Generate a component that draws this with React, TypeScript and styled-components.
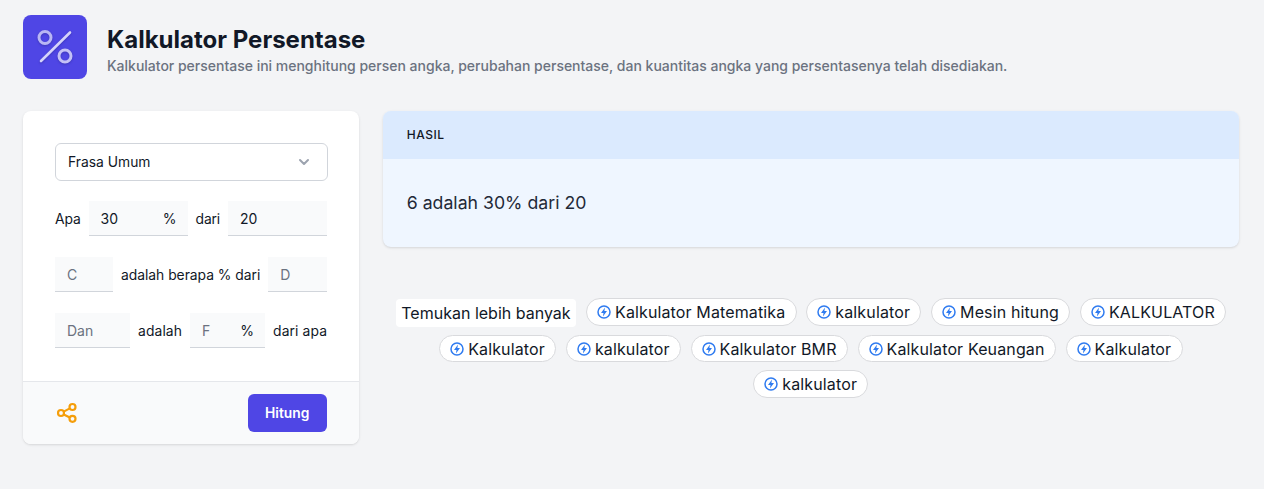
import React from "react";
import styled, { createGlobalStyle } from "styled-components";

const Global = createGlobalStyle`
  html, body { margin: 0; padding: 0; background: #f3f4f6; }
  body { font-family: Inter, "Liberation Sans", sans-serif; color: #111827; }
  * { box-sizing: border-box; }
`;
const Page = styled.div`
  width: 1264px;
  height: 489px;
  padding: 15px 25px 0 23px;
  overflow: hidden;
`;
const Header = styled.header`
  display: flex;
  align-items: center;
  gap: 20px;
  height: 64px;
`;
const LogoBox = styled.div`
  width: 64px;
  height: 64px;
  border-radius: 8px;
  background: #4f46e5;
`;
const PercentSvg = styled.svg`
  display: block;
  filter: drop-shadow(0 1px 1px rgba(30, 27, 110, 0.35));
`;
const Heading = styled.div`
  display: flex;
  flex-direction: column;
  padding-top: 6px;
`;
const Title = styled.h1`
  margin: 0;
  font-size: 24px;
  line-height: 32px;
  font-weight: 700;
  color: #111827;
`;
const Subtitle = styled.p`
  margin: 0;
  font-size: 14px;
  line-height: 20px;
  font-weight: 500;
  letter-spacing: -0.008px;
  color: #6b7280;
`;
const Main = styled.main`
  display: flex;
  gap: 24px;
  margin-top: 32px;
  align-items: flex-start;
`;
const Card = styled.section`
  width: 336px;
  height: 333px;
  background: #fff;
  border-radius: 8px;
  box-shadow: 0 1px 3px rgba(0,0,0,.1), 0 1px 2px -1px rgba(0,0,0,.1);
  overflow: hidden;
  display: flex;
  flex-direction: column;
`;
const CardBody = styled.div`
  flex: 1;
  padding: 32px 32px 0;
  display: flex;
  flex-direction: column;
`;
const Select = styled.div`
  width: 273px;
  height: 38px;
  border: 1px solid #d1d5db;
  border-radius: 6px;
  padding: 0 15px 0 12px;
  display: flex;
  align-items: center;
  justify-content: space-between;
  font-size: 13.85px;
  color: #111827;
  margin-bottom: 20px;
`;
const Row = styled.div<{ $spacing: number }>`
  display: flex;
  align-items: center;
  gap: 8px;
  height: 35px;
  margin-bottom: 21px;
  font-size: 13.88px;
  letter-spacing: ${(p) => p.$spacing}px;
  color: #111827;
  white-space: nowrap;
`;
const Field = styled.div<{ $w: number }>`
  flex: none;
  width: ${(p) => p.$w}px;
  height: 35px;
  background: #f9fafb;
  border-bottom: 1px solid #d1d5db;
  padding: 0 12px;
  display: flex;
  align-items: center;
  justify-content: space-between;
  font-size: 14px;
  letter-spacing: 0;
`;
const Placeholder = styled.span`
  color: #6b7280;
`;
const Unit = styled.span`
  margin-right: -1px;
`;
const Footer = styled.footer`
  height: 63px;
  background: #f9fafb;
  border-top: 1px solid #e5e7eb;
  padding: 0 32px;
  display: flex;
  align-items: center;
  justify-content: space-between;
`;
const Button = styled.button`
  width: 79px;
  height: 38px;
  border: 0;
  border-radius: 6px;
  background: #4f46e5;
  color: #fff;
  font: 600 13.8px Inter, sans-serif;
`;
const Right = styled.div`
  width: 857px;
  display: flex;
  flex-direction: column;
`;
const Result = styled.section`
  border-radius: 8px;
  overflow: hidden;
  background: #eff6ff;
  box-shadow: 0 1px 3px rgba(0,0,0,.1), 0 1px 2px -1px rgba(0,0,0,.1);
  height: 136px;
`;
const ResultHead = styled.div`
  height: 48px;
  background: #dbeafe;
  padding: 0 24px 2px;
  display: flex;
  align-items: center;
  font-size: 12px;
  font-weight: 500;
  letter-spacing: 0.55px;
  color: #111827;
`;
const ResultBody = styled.div`
  height: 88px;
  padding: 0 24px 2px;
  display: flex;
  align-items: center;
  font-size: 17.7px;
  color: #1f2937;
`;
const Chips = styled.div`
  display: flex;
  flex-wrap: wrap;
  justify-content: center;
  align-items: flex-start;
  gap: 8px 9.7px;
  margin-top: 51.4px;
  padding: 0 8px;
`;
const Lead = styled.span`
  background: #fff;
  height: 28px;
  margin: 1px 0 -0.4px;
  padding: 0 5.75px;
  border-radius: 4px;
  display: flex;
  align-items: center;
  font-size: 16px;
  font-weight: 400;
  color: #111827;
`;
const Chip = styled.a`
  height: 27.4px;
  padding: 0 10.3px 0 10px;
  border: 1px solid #d9dadd;
  border-radius: 14px;
  background: #fff;
  display: flex;
  align-items: center;
  gap: 4px;
  font-size: 16px;
  font-weight: 400;
  letter-spacing: 0.13px;
  color: #111827;
`;

const Percent = () => (
  <PercentSvg width="64" height="64" viewBox="0 0 64 64" fill="none" strokeWidth="3" strokeLinecap="round">
    <circle cx="22" cy="22.5" r="6" stroke="#b9b6f4" />
    <circle cx="42" cy="41" r="6" stroke="#c4c1f6" />
    <path d="M47 17.5 18 46" stroke="#d5d3fa" strokeWidth="2.6" />
  </PercentSvg>
);
const Chevron = () => (
  <svg width="16" height="16" viewBox="0 0 16 16" fill="none" stroke="#9ca3af" strokeWidth="2" strokeLinecap="round" strokeLinejoin="round">
    <path d="M4 6 8 10 12 6" />
  </svg>
);
const Share = () => (
  <svg width="24" height="24" viewBox="0 0 24 24" fill="none" stroke="#f59e0b" strokeWidth="2.2">
    <circle cx="17.5" cy="6" r="3" />
    <circle cx="6" cy="12" r="3" />
    <circle cx="17.5" cy="17.8" r="3" />
    <path d="M8.7 10.6 14.8 7.4M8.7 13.4 14.8 16.4" />
  </svg>
);
const Bolt = () => (
  <svg width="14" height="14" viewBox="0 0 14 14" fill="none">
    <circle cx="7" cy="7" r="6" stroke="#2f7bf0" strokeWidth="1.5" />
    <path d="M8 2.6 4 7.9H6.5L5.9 11.4 10 6H7.4Z" fill="#2f7bf0" />
  </svg>
);

const chips = ["Kalkulator Matematika","kalkulator","Mesin hitung","KALKULATOR","Kalkulator","kalkulator","Kalkulator BMR","Kalkulator Keuangan","Kalkulator","kalkulator"];

export default function App() {
  return (
    <Page>
      <Global />
      <Header>
        <LogoBox><Percent /></LogoBox>
        <Heading>
          <Title>Kalkulator Persentase</Title>
          <Subtitle>Kalkulator persentase ini menghitung persen angka, perubahan persentase, dan kuantitas angka yang persentasenya telah disediakan.</Subtitle>
        </Heading>
      </Header>
      <Main>
        <Card>
          <CardBody>
            <Select>Frasa Umum<Chevron /></Select>
            <Row $spacing={-0.15}>Apa<Field $w={99}><span>30</span><Unit>%</Unit></Field>dari<Field $w={99}><span>20</span></Field></Row>
            <Row $spacing={-0.03}><Field $w={58}><Placeholder>C</Placeholder></Field>adalah berapa % dari<Field $w={59}><Placeholder>D</Placeholder></Field></Row>
            <Row $spacing={0.1}><Field $w={75}><Placeholder>Dan</Placeholder></Field>adalah<Field $w={75}><Placeholder>F</Placeholder><Unit>%</Unit></Field>dari apa</Row>
          </CardBody>
          <Footer><Share /><Button>Hitung</Button></Footer>
        </Card>
        <Right>
          <Result>
            <ResultHead>HASIL</ResultHead>
            <ResultBody>6 adalah 30% dari 20</ResultBody>
          </Result>
          <Chips>
            <Lead>Temukan lebih banyak</Lead>
            {chips.map((c, i) => <Chip key={i}><Bolt />{c}</Chip>)}
          </Chips>
        </Right>
      </Main>
    </Page>
  );
}
